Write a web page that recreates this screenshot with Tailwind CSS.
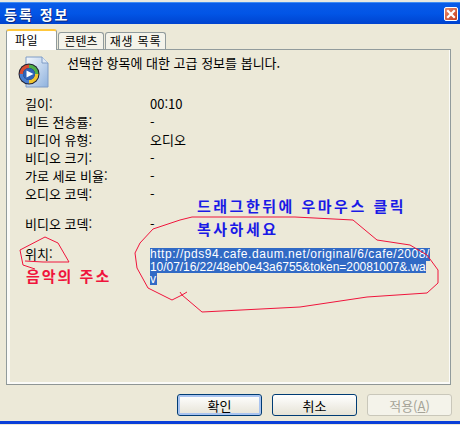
<!DOCTYPE html>
<html lang="ko">
<head>
<meta charset="UTF-8">
<title>등록 정보</title>
<script src="https://cdn.jsdelivr.net/npm/@tailwindcss/browser@4"></script>
</head>
<body class="bg-white">
<div class="relative w-[460px] h-[425px] overflow-hidden bg-[#ece9d8] font-['Noto_Sans_CJK_KR','Noto_Sans',sans-serif] text-[13px] text-black flex flex-col">
  <!-- desktop strip above the window -->
  <div class="h-[2px] bg-[#e8e8e0] shrink-0"></div>

  <!-- title bar -->
  <div class="h-[22px] shrink-0 flex items-center justify-between pl-[4px] pr-[2px] bg-gradient-to-b from-[#0a5be8] via-[#0255e6] to-[#0043cf] border-t border-[#3f8cf3]">
    <span class="text-white font-bold text-[14px] tracking-[2px] leading-none [text-shadow:1px_1px_0_#0a2a80]">등록 정보</span>
    <div class="w-[14px] h-[14px] rounded-[2px] border border-white bg-gradient-to-br from-[#e98a6a] to-[#c4391a] flex items-center justify-center">
      <svg width="10" height="10" viewBox="0 0 10 10"><path d="M2 2L8 8M8 2L2 8" stroke="#fff" stroke-width="2.2" stroke-linecap="square"/></svg>
    </div>
  </div>

  <!-- tabs -->
  <div class="relative z-10 flex items-end h-[26px] pl-[6px] -mb-px shrink-0 text-[12px]">
    <div class="h-[21px] w-[51px] mr-[1px] pl-[8px] pb-[2px] bg-white rounded-t-[3px] border-x border-[#919b9c] border-t-[2px] border-t-[#ffc73c] flex items-center tracking-[0.5px]">파일</div>
    <div class="h-[17px] w-[46px] mr-[1px] mb-px bg-[#f4f3ea] rounded-t-[3px] border-x border-t border-[#919b9c] flex items-center justify-center">콘텐츠</div>
    <div class="h-[17px] w-[61px] mb-px bg-[#f4f3ea] rounded-t-[3px] border-x border-t border-[#919b9c] flex items-center justify-center tracking-[0.8px]">재생 목록</div>
  </div>

  <!-- tab panel -->
  <div class="ml-[6px] w-[445px] h-[336px] shrink-0 border border-[#919b9c] border-b-[#8f9695]">
    <div class="h-full border-l-[3px] border-r-[1px] border-b-[2px] border-[#fbfbf8] pl-[15px] pt-[2px]">
      <div class="flex h-[45px]">
        <svg class="shrink-0 -ml-[9px] mt-[3px]" width="34" height="34" viewBox="0 0 34 34">
          <defs>
            <linearGradient id="doc" x1="0" y1="0" x2="1" y2="1"><stop offset="0" stop-color="#f4f8fd"/><stop offset="1" stop-color="#8fb2de"/></linearGradient>
          </defs>
          <path d="M10 2H26L32 8V32H10Z" fill="url(#doc)" stroke="#7e9cc6"/>
          <path d="M26 2V8H32" fill="#dfe9f6" stroke="#7e9cc6"/>
          <circle cx="13" cy="19" r="10.5" fill="#223" />
          <path d="M3.5 19A9.5 9.5 0 0 1 13 9.5V13A6 6 0 0 0 7 19Z" fill="#d84b32"/>
          <path d="M13 9.5A9.5 9.5 0 0 1 22.5 19H19A6 6 0 0 0 13 13Z" fill="#4fae48"/>
          <path d="M22.5 19A9.5 9.5 0 0 1 13 28.5V25A6 6 0 0 0 19 19Z" fill="#f1c52e"/>
          <path d="M13 28.5A9.5 9.5 0 0 1 3.5 19H7A6 6 0 0 0 13 25Z" fill="#4a7fd0"/>
          <circle cx="13" cy="19" r="6" fill="#2f62b8"/>
          <path d="M10.5 15.5L17.5 19L10.5 22.5Z" fill="#fff"/>
        </svg>
        <p class="ml-[17px] mt-[2px] leading-[18px]">선택한 항목에 대한 고급 정보를 봅니다.</p>
      </div>

      <dl class="grid grid-cols-[125px_1fr] auto-rows-[18px] items-center -mt-[2px]">
        <dt>길이:</dt><dd>00:10</dd>
        <dt>비트 전송률:</dt><dd>-</dd>
        <dt>미디어 유형:</dt><dd>오디오</dd>
        <dt>비디오 크기:</dt><dd>-</dd>
        <dt>가로 세로 비율:</dt><dd>-</dd>
        <dt>오디오 코덱:</dt><dd>-</dd>
      </dl>
      <dl class="grid grid-cols-[125px_1fr] auto-rows-[18px] items-center mt-[12px]">
        <dt>비디오 코덱:</dt><dd>-</dd>
      </dl>
      <div class="grid grid-cols-[125px_1fr] mt-[12px]">
        <span class="leading-[18px]">위치:</span>
        <div class="mt-[3px] font-['Liberation_Sans',sans-serif] text-[12px] text-white">
          <div class="w-[280px] h-[13px] leading-[13px] bg-[#316ac5] whitespace-nowrap tracking-[0.55px]">http://pds94.cafe.daum.net/original/6/cafe/2008/</div>
          <div class="w-[276px] h-[12px] leading-[12px] bg-[#316ac5] whitespace-nowrap tracking-[-0.05px]">10/07/16/22/48eb0e43a6755&amp;token=20081007&amp;.wa</div>
          <div class="w-[7px] h-[12px] leading-[12px] bg-[#316ac5]">v</div>
        </div>
      </div>
    </div>
  </div>

  <!-- buttons -->
  <div class="flex justify-end gap-[10px] pr-[8px] mt-[9px] shrink-0">
    <button class="w-[85px] h-[22px] rounded-[3px] border border-[#003c74] bg-gradient-to-b from-white to-[#e6e3d6] shadow-[inset_0_0_0_2px_#a9c4f0] leading-none">확인</button>
    <button class="w-[85px] h-[22px] rounded-[3px] border border-[#003c74] bg-gradient-to-b from-white to-[#e6e3d6] leading-none">취소</button>
    <button class="w-[85px] h-[22px] rounded-[3px] border border-[#c9c7ba] bg-[#f4f3ea] text-[#a5a397] leading-none">적용(<span class="underline">A</span>)</button>
  </div>

  <!-- window bottom edge -->
  <div class="absolute left-0 right-0 bottom-[1px] h-[3px] bg-[#0a3fd8]"></div>

  <!-- hand drawn notes over the dialog -->
  <svg class="absolute inset-0 pointer-events-none" width="460" height="425" viewBox="0 0 460 425" fill="none" stroke="#f0143c" stroke-width="1">
    <path d="M192 217L180 220L153 229L140 243L135 253L137 268L148 288L172 300L182 295L202 312L300 307L367 297L427 293L438 283L438 270L427 255L410 245L377 240L353 220L295 217L192 217"/>
    <path d="M182 295L180 292M182 295L187 292"/>
    <path d="M69 262L43 262L25 261M69 262L58 243L45 237L20 250L23 265L35 269"/>
  </svg>
  <span class="absolute left-[197px] top-[196px] text-[15px] leading-[20px] font-bold text-[#1a1ae6] tracking-[2.5px] whitespace-nowrap">드래그한뒤에 우마우스 클릭</span>
  <span class="absolute left-[197px] top-[219px] text-[15px] leading-[20px] font-bold text-[#1a1ae6] tracking-[2.5px] whitespace-nowrap">복사하세요</span>
  <span class="absolute left-[26px] top-[266px] text-[15px] leading-[20px] font-bold text-[#f0143c] tracking-[2px] whitespace-nowrap">음악의 주소</span>
</div>
</body>
</html>
